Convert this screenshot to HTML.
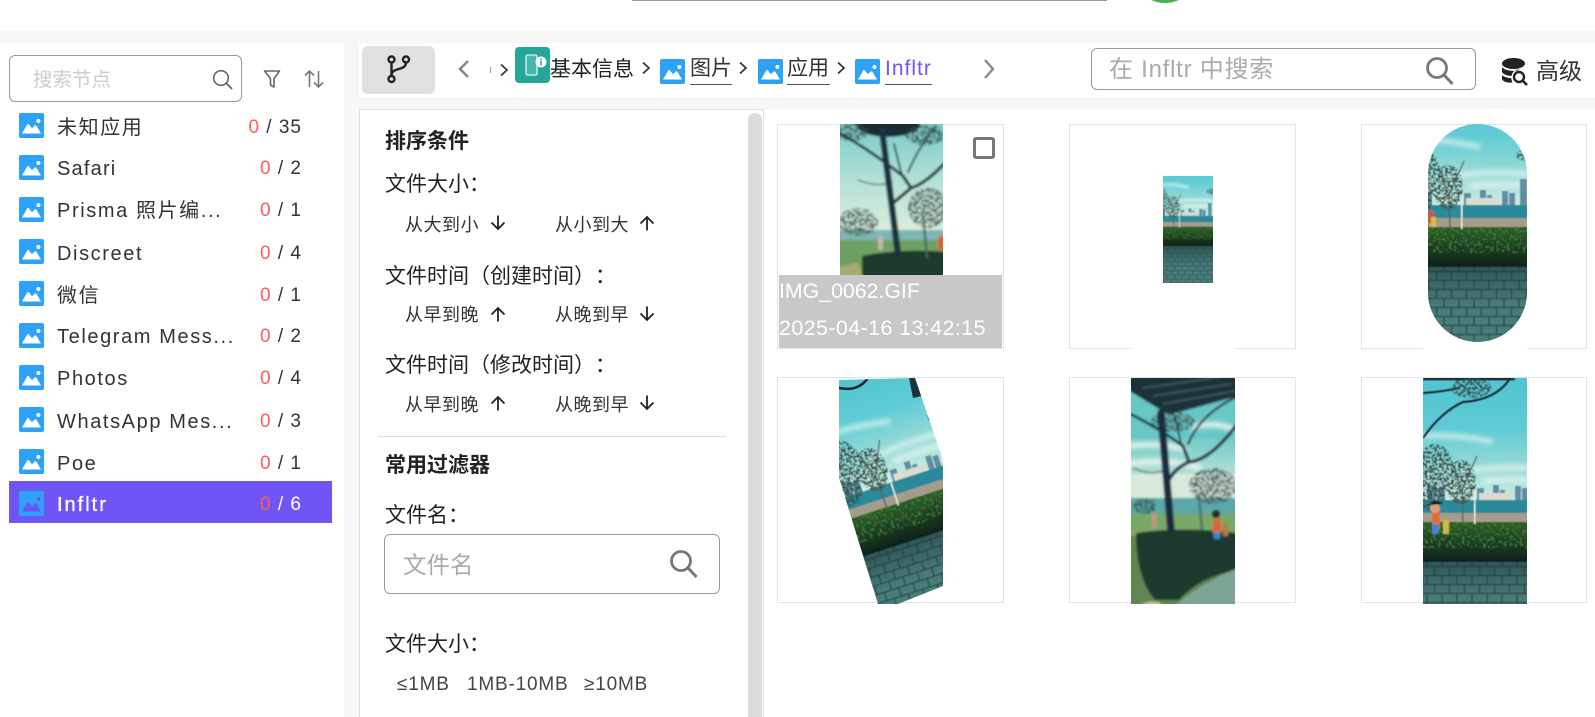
<!DOCTYPE html>
<html lang="zh"><head><meta charset="utf-8"><title>Infltr</title>
<style>
html,body{margin:0;padding:0;width:1595px;height:717px;overflow:hidden;background:#fff}
body{position:relative;font-family:"Liberation Sans","Noto Sans CJK SC",sans-serif;color:#333;text-spacing-trim:space-all}
.a{position:absolute;box-sizing:border-box}
.t{position:absolute;white-space:nowrap;line-height:30px;height:30px}
.n{font-size:20px;letter-spacing:1.6px;left:57px;color:#333}
.c{font-size:19px;letter-spacing:1px;right:1293px;color:#333;text-align:right}
.c b{font-weight:normal;color:#ff5a5f}
.l{font-size:21px;left:385px;color:#222}
.h{font-size:21px;left:385px;font-weight:bold;color:#222}
.s{font-size:18px;color:#333;letter-spacing:.5px}
.ic{position:absolute;width:25px;height:25px}
.card{position:absolute;width:227px;height:225px;border:1px solid #e3e3e3;box-sizing:border-box;background:#fff}
.u{position:absolute;height:1px;background:#555}
.sz{font-size:19px;color:#444;letter-spacing:.8px}
.bc{font-size:21px;color:#333}
</style></head><body>
<svg width="0" height="0" style="position:absolute">
<defs>
<symbol id="pic" viewBox="0 0 25 25"><rect width="25" height="25" rx="2" fill="#2ea1f8"/><path d="M3 20.5L8.3 11.4Q9 10.4 9.8 11.4L13 15.2L15.4 12.8Q16.4 11.9 17.4 12.8L22 20.5Z" fill="currentColor"/><circle cx="19.4" cy="8" r="2" fill="currentColor"/></symbol>
<symbol id="up" viewBox="0 0 16 16"><path d="M8 15.5V2M1.5 8.5L8 2L14.5 8.5" fill="none" stroke="#222" stroke-width="1.8"/></symbol>
<symbol id="dn" viewBox="0 0 16 16"><path d="M8 .5V14M1.5 7.5L8 14L14.5 7.5" fill="none" stroke="#222" stroke-width="1.8"/></symbol>
<symbol id="chev" viewBox="0 0 10 14"><path d="M2 1.5L8 7L2 12.5" fill="none" stroke="#333" stroke-width="1.7"/></symbol>
</defs></svg>

<!-- page background bands -->
<div class="a" style="left:0;top:31px;width:1595px;height:12px;background:#f7f7f7"></div>
<div class="a" style="left:344px;top:43px;width:15px;height:674px;background:#f7f7f7"></div>
<div class="a" style="left:344px;top:97px;width:1251px;height:12px;background:#f7f7f7"></div>

<!-- top remnants -->
<div class="a" style="left:632px;top:0;width:475px;height:1px;background:#999"></div>
<div class="a" style="left:1131px;top:-65px;width:68px;height:68px;border-radius:50%;background:#4caf50"></div>

<!-- sidebar -->
<div class="a" style="left:9px;top:55px;width:233px;height:47px;border:1px solid #999;border-radius:6px;background:#fff"></div>
<div class="t" style="left:33px;top:65px;font-size:19.5px;color:#c8ccd2">搜索节点</div>
<svg class="a" style="left:211px;top:68px" width="24" height="24" viewBox="0 0 24 24"><circle cx="10" cy="10" r="7.3" fill="none" stroke="#666" stroke-width="1.6"/><path d="M15.3 15.3L21 21" stroke="#666" stroke-width="1.8"/></svg>
<svg class="a" style="left:263px;top:69px" width="18" height="20" viewBox="0 0 18 20"><path d="M1.5 2H16.5L11 9.5V18L7.5 16V9.5Z" fill="none" stroke="#666" stroke-width="1.6" stroke-linejoin="round"/></svg>
<svg class="a" style="left:304px;top:69px" width="20" height="20" viewBox="0 0 20 20"><path d="M5.5 18V2M1 6.5L5.5 2L10 6.5M14.5 2V18M10 13.5L14.5 18L19 13.5" fill="none" stroke="#777" stroke-width="1.6"/></svg>

<div class="a" style="left:9px;top:481px;width:323px;height:42px;background:#6e56f5"></div>

<svg class="ic" style="left:19px;top:113px;color:#fff"><use href="#pic"/></svg>
<svg class="ic" style="left:19px;top:155px;color:#fff"><use href="#pic"/></svg>
<svg class="ic" style="left:19px;top:197px;color:#fff"><use href="#pic"/></svg>
<svg class="ic" style="left:19px;top:239px;color:#fff"><use href="#pic"/></svg>
<svg class="ic" style="left:19px;top:281px;color:#fff"><use href="#pic"/></svg>
<svg class="ic" style="left:19px;top:323px;color:#fff"><use href="#pic"/></svg>
<svg class="ic" style="left:19px;top:365px;color:#fff"><use href="#pic"/></svg>
<svg class="ic" style="left:19px;top:407px;color:#fff"><use href="#pic"/></svg>
<svg class="ic" style="left:19px;top:449px;color:#fff"><use href="#pic"/></svg>
<svg class="ic" style="left:19px;top:491px;color:#6e56f5"><use href="#pic"/></svg>

<div class="t n" style="top:113px">未知应用</div><div class="t c" style="top:113px"><b>0</b> / 35</div>
<div class="t n" style="top:154px;letter-spacing:1.2px">Safari</div><div class="t c" style="top:154px"><b>0</b> / 2</div>
<div class="t n" style="top:196px">Prisma 照片编...</div><div class="t c" style="top:196px"><b>0</b> / 1</div>
<div class="t n" style="top:239px">Discreet</div><div class="t c" style="top:239px"><b>0</b> / 4</div>
<div class="t n" style="top:281px">微信</div><div class="t c" style="top:281px"><b>0</b> / 1</div>
<div class="t n" style="top:322px">Telegram Mess...</div><div class="t c" style="top:322px"><b>0</b> / 2</div>
<div class="t n" style="top:364px">Photos</div><div class="t c" style="top:364px"><b>0</b> / 4</div>
<div class="t n" style="top:407px">WhatsApp Mes...</div><div class="t c" style="top:407px"><b>0</b> / 3</div>
<div class="t n" style="top:449px">Poe</div><div class="t c" style="top:449px"><b>0</b> / 1</div>
<div class="t n" style="top:490px;color:#fff;-webkit-text-stroke:.3px #fff;letter-spacing:2px">Infltr</div><div class="t c" style="top:490px;color:#fff"><b>0</b> / 6</div>

<!-- toolbar -->
<div class="a" style="left:362px;top:46px;width:73px;height:48px;background:#e0e0e0;border-radius:6px"></div>
<svg class="a" style="left:385px;top:53px" width="27" height="32" viewBox="0 0 27 32"><circle cx="6.5" cy="6.5" r="3" fill="none" stroke="#222" stroke-width="2.4"/><circle cx="21" cy="6.5" r="3" fill="none" stroke="#222" stroke-width="2.4"/><circle cx="6.5" cy="26" r="3" fill="none" stroke="#222" stroke-width="2.4"/><path d="M6.5 9.5V23M21 9.5C21 18 7 14 6.5 22" fill="none" stroke="#222" stroke-width="2.4"/></svg>
<svg class="a" style="left:457px;top:59px" width="14" height="20" viewBox="0 0 14 20"><path d="M11 2L3 10L11 18" fill="none" stroke="#888" stroke-width="2.6"/></svg>
<div class="a" style="left:490px;top:67px;width:1px;height:6px;background:#999"></div>
<svg class="a" style="left:499px;top:63px" width="10" height="14"><use href="#chev"/></svg>
<div class="a" style="left:515px;top:47px;width:35px;height:36px;background:#26a69a;border-radius:4px"></div>
<svg class="a" style="left:515px;top:47px" width="35" height="36" viewBox="0 0 35 36"><rect x="11" y="8" width="11" height="20" rx="1.5" fill="#4dbcb0" stroke="#fff" stroke-width="1.3" opacity=".85"/><circle cx="26" cy="15" r="5.5" fill="#fff"/><rect x="25.2" y="14" width="1.6" height="4.4" fill="#26a69a"/><rect x="25.2" y="11.6" width="1.6" height="1.6" fill="#26a69a"/></svg>
<div class="t bc" style="left:550px;top:55px;color:#222">基本信息</div>
<svg class="a" style="left:641px;top:61px" width="10" height="14"><use href="#chev"/></svg>
<svg class="ic" style="left:660px;top:59px;color:#fff"><use href="#pic"/></svg>
<div class="t bc" style="left:690px;top:54px">图片</div>
<div class="u" style="left:690px;top:84px;width:42px"></div>
<svg class="a" style="left:738px;top:61px" width="10" height="14"><use href="#chev"/></svg>
<svg class="ic" style="left:758px;top:59px;color:#fff"><use href="#pic"/></svg>
<div class="t bc" style="left:787px;top:54px">应用</div>
<div class="u" style="left:787px;top:84px;width:43px"></div>
<svg class="a" style="left:836px;top:61px" width="10" height="14"><use href="#chev"/></svg>
<svg class="ic" style="left:855px;top:59px;color:#fff"><use href="#pic"/></svg>
<div class="t" style="left:885px;top:54px;font-size:21px;letter-spacing:1px;color:#6e56f5">Infltr</div>
<div class="u" style="left:885px;top:84px;width:47px"></div>
<svg class="a" style="left:982px;top:58px" width="14" height="22" viewBox="0 0 14 22"><path d="M3 2L11 11L3 20" fill="none" stroke="#888" stroke-width="2.4"/></svg>

<div class="a" style="left:1091px;top:48px;width:385px;height:42px;border:1px solid #999;border-radius:6px"></div>
<div class="t" style="left:1109px;top:55px;font-size:24px;letter-spacing:.75px;color:#aaa">在 Infltr 中搜索</div>
<svg class="a" style="left:1424px;top:55px" width="32" height="32" viewBox="0 0 32 32"><circle cx="13" cy="13" r="9.5" fill="none" stroke="#777" stroke-width="2.8"/><path d="M20 20L28.5 29" stroke="#777" stroke-width="3"/></svg>
<svg class="a" style="left:1501px;top:57px" width="29" height="30" viewBox="0 0 29 30"><ellipse cx="12.5" cy="6.5" rx="11.5" ry="5.5" fill="#222"/><path d="M1 10C4 14 14 15 19 12.5C13 12 11 16 10.5 19C6 19 2 17 1 15ZM1 18C3 20 7 21 10 21L11.5 25.5C7 26 2 25 1 22Z" fill="#222"/><circle cx="18" cy="20" r="5" fill="none" stroke="#222" stroke-width="2.4"/><path d="M21.5 23.5L26 28" stroke="#222" stroke-width="2.6"/></svg>
<div class="t" style="left:1536px;top:56px;font-size:23px;color:#333">高级</div>

<!-- filter panel -->
<div class="a" style="left:359px;top:109px;width:405px;height:620px;border:1px solid #e0e0e0;background:#fff"></div>
<div class="a" style="left:748px;top:113px;width:14px;height:610px;background:#dcdcdc;border-radius:7px 7px 0 0"></div>

<div class="t h" style="top:127px">排序条件</div>
<div class="t l" style="top:170px">文件大小：</div>
<div class="t s" style="left:405px;top:210px">从大到小</div><svg class="a" style="left:490px;top:215px" width="16" height="16"><use href="#dn"/></svg>
<div class="t s" style="left:555px;top:210px">从小到大</div><svg class="a" style="left:639px;top:215px" width="16" height="16"><use href="#up"/></svg>
<div class="t l" style="top:262px">文件时间（创建时间）：</div>
<div class="t s" style="left:405px;top:300px">从早到晚</div><svg class="a" style="left:490px;top:306px" width="16" height="16"><use href="#up"/></svg>
<div class="t s" style="left:555px;top:300px">从晚到早</div><svg class="a" style="left:639px;top:306px" width="16" height="16"><use href="#dn"/></svg>
<div class="t l" style="top:351px">文件时间（修改时间）：</div>
<div class="t s" style="left:405px;top:390px">从早到晚</div><svg class="a" style="left:490px;top:395px" width="16" height="16"><use href="#up"/></svg>
<div class="t s" style="left:555px;top:390px">从晚到早</div><svg class="a" style="left:639px;top:395px" width="16" height="16"><use href="#dn"/></svg>
<div class="a" style="left:378px;top:436px;width:348px;height:1px;background:#e0e0e0"></div>
<div class="t h" style="top:451px">常用过滤器</div>
<div class="t l" style="top:501px">文件名：</div>
<div class="a" style="left:384px;top:534px;width:336px;height:60px;border:1px solid #999;border-radius:6px"></div>
<div class="t" style="left:403px;top:550px;font-size:23.5px;color:#aaa">文件名</div>
<svg class="a" style="left:668px;top:548px" width="32" height="32" viewBox="0 0 32 32"><circle cx="13" cy="13" r="9.5" fill="none" stroke="#777" stroke-width="2.8"/><path d="M20 20L28.5 29" stroke="#777" stroke-width="3"/></svg>
<div class="t l" style="top:630px">文件大小：</div>
<div class="t sz" style="left:397px;top:670px">≤1MB</div>
<div class="t sz" style="left:467px;top:670px">1MB-10MB</div>
<div class="t sz" style="left:584px;top:670px">≥10MB</div>

<!-- cards -->
<div class="card" style="left:777px;top:124px"></div>
<div class="card" style="left:1069px;top:124px"></div>
<div class="card" style="left:1361px;top:124px;width:226px"></div>
<div class="card" style="left:777px;top:377px;height:226px"></div>
<div class="card" style="left:1069px;top:377px;height:226px"></div>
<div class="card" style="left:1361px;top:377px;width:226px;height:226px"></div>
<div class="a" style="left:1131px;top:346px;width:104px;height:3px;background:#fff"></div>
<div class="a" style="left:1423px;top:346px;width:104px;height:3px;background:#fff"></div>

<svg class="a" style="left:0;top:0;pointer-events:none" width="1595" height="717" viewBox="0 0 1595 717">
<defs>
<linearGradient id="sky" x1="0" y1="0" x2="0" y2="1"><stop offset="0" stop-color="#45bdcd"/><stop offset=".55" stop-color="#5fcbd5"/><stop offset=".8" stop-color="#9cdcd8"/><stop offset="1" stop-color="#cfeee5"/></linearGradient>
<linearGradient id="sky2" x1="0" y1="0" x2="0" y2="1"><stop offset="0" stop-color="#74cbc9"/><stop offset=".55" stop-color="#b9e2d8"/><stop offset="1" stop-color="#e2eede"/></linearGradient>
<linearGradient id="hed" x1="0" y1="0" x2="0" y2="1"><stop offset="0" stop-color="#2f6029"/><stop offset=".45" stop-color="#1c3f25"/><stop offset="1" stop-color="#0e1e18"/></linearGradient>
<linearGradient id="pave" x1="0" y1="0" x2="0" y2="1"><stop offset="0" stop-color="#1f3d40" stop-opacity=".6"/><stop offset=".3" stop-color="#1f3d40" stop-opacity="0"/></linearGradient>
<pattern id="brick" width="15" height="18" patternUnits="userSpaceOnUse"><rect width="15" height="18" fill="#4a7c7a"/><path d="M0 8.5H15M0 17.5H15M4 0V8M11.5 9V17" stroke="#23474a" stroke-width="1.2"/></pattern>
<filter id="b1" x="-5%" y="-5%" width="110%" height="110%"><feGaussianBlur stdDeviation=".5"/></filter>
<filter id="b2" x="-5%" y="-5%" width="110%" height="110%"><feGaussianBlur stdDeviation="1"/></filter>
<filter id="b3" x="-20%" y="-50%" width="140%" height="200%"><feGaussianBlur stdDeviation="2.2"/></filter>
<filter id="leaf" x="0" y="0" width="100%" height="100%" color-interpolation-filters="sRGB"><feTurbulence type="fractalNoise" baseFrequency=".42" numOctaves="2" seed="3"/><feColorMatrix values="0 0 0 0 .2  0 0 0 0 .3  0 0 0 0 .27  0 0 0 7 -3"/><feComposite in2="SourceGraphic" operator="in"/></filter>
<filter id="hedn" x="0" y="0" width="100%" height="100%" color-interpolation-filters="sRGB"><feTurbulence type="fractalNoise" baseFrequency=".38" numOctaves="2" seed="8"/><feColorMatrix values="0 0 0 0 .27  0 0 0 0 .5  0 0 0 0 .2  0 0 0 6 -3.2"/><feComposite in2="SourceGraphic" operator="in"/></filter>
<clipPath id="c1"><rect x="840" y="124" width="103" height="152"/></clipPath>
<clipPath id="c2"><rect x="1163" y="176" width="50" height="107"/></clipPath>
<clipPath id="c3"><rect x="1428" y="124" width="99" height="218" rx="49.5"/></clipPath>
<clipPath id="c4"><polygon points="839,380 915,378 943,460 943,586 898,604 878,604 839,478"/></clipPath>
<clipPath id="c5"><rect x="1131" y="378" width="104" height="226"/></clipPath>
<clipPath id="c6"><rect x="1423" y="378" width="104" height="226"/></clipPath>
<g id="harbour">
<rect x="-120" y="-40" width="340" height="165" fill="url(#sky)"/>
<g filter="url(#b3)"><path d="M40 94Q80 86 130 92M60 103Q95 99 140 105M-40 62Q20 52 70 64" fill="none" stroke="#eef9f2" stroke-width="6" opacity=".6"/></g>
<g fill="#5f8da3"><rect x="-60" y="108" width="28" height="14"/><rect x="4" y="107" width="9" height="15"/><rect x="14" y="110" width="8" height="12"/><rect x="54" y="110" width="7" height="12"/><rect x="70" y="107" width="6" height="15"/><rect x="77" y="112" width="5" height="10"/><rect x="92" y="108" width="6" height="14"/><rect x="99" y="110" width="6" height="12"/><rect x="110" y="96" width="7" height="26"/></g>
<rect x="56" y="115" width="34" height="7" fill="#d9dccf"/>
<rect x="-120" y="122" width="340" height="14" fill="#2a8a9b"/>
<rect x="-120" y="135" width="340" height="11" fill="#a69c8c"/>
<rect x="-120" y="144" width="340" height="42" fill="url(#hed)"/>
<rect x="-120" y="144" width="340" height="26" filter="url(#hedn)"/>
<rect x="-120" y="184" width="340" height="130" fill="url(#brick)"/>
<rect x="-120" y="184" width="340" height="130" fill="url(#pave)"/>
<g filter="url(#leaf)"><ellipse cx="12" cy="90" rx="18" ry="24"/><ellipse cx="8" cy="118" rx="14" ry="14"/><ellipse cx="38" cy="104" rx="15" ry="22"/><ellipse cx="118" cy="72" rx="12" ry="6"/></g>
<path d="M40 146L39 112M39 112L28 82M39 112L54 78M38 126L20 108" stroke="#4f5f54" stroke-width="1.3" fill="none"/>
<rect x="51" y="112" width="1.5" height="34" fill="#e3eae0"/>
</g>
<g id="trees6">
<path d="M0 15Q18 14 36 10M0 60Q18 34 40 24Q72 22 86 2" fill="none" stroke="#12242f" stroke-width="2.4"/>
<path d="M0 1H92" stroke="#12242f" stroke-width="3"/>
<g filter="url(#leaf)"><ellipse cx="48" cy="10" rx="20" ry="10"/></g>
<rect x="9" y="133" width="8" height="18" fill="#dd7038"/><rect x="9" y="146" width="7" height="10" fill="#3f87c9"/><circle cx="12" cy="130" r="5" fill="#d9a27c"/><path d="M6 127Q12 119 19 126" fill="#1a1a22"/><rect x="20" y="142" width="6" height="14" fill="#cdb84a"/>
</g>
</defs>

<!-- card 1 -->
<g clip-path="url(#c1)"><g filter="url(#b2)">
<rect x="836" y="120" width="112" height="120" fill="url(#sky2)"/>
<rect x="836" y="230" width="112" height="11" fill="#7fb5b3"/>
<rect x="836" y="240" width="112" height="40" fill="#6ea063"/>
<path d="M862 256Q900 248 948 252V280H862Z" fill="#1d3a2c"/>
<path d="M838 268L858 262L864 280H838Z" fill="#a5ad70"/>
<ellipse cx="888" cy="124" rx="32" ry="13" fill="#1d2c33"/>
<g filter="url(#leaf)"><ellipse cx="928" cy="208" rx="20" ry="20"/><ellipse cx="858" cy="222" rx="20" ry="14"/><ellipse cx="852" cy="132" rx="16" ry="9"/><ellipse cx="925" cy="135" rx="20" ry="10"/></g>
<g fill="none" stroke="#1e3040" stroke-linecap="round"><path d="M882 130L898 254" stroke-width="6.5"/><path d="M838 132Q870 150 903 176" stroke-width="2.8"/><path d="M903 176L911 188Q925 184 945 163" stroke-width="3.2"/><path d="M911 188L892 204" stroke-width="3.2"/><path d="M902 176L894 144" stroke-width="1.8"/><path d="M908 172Q920 145 936 126" stroke-width="1.8"/><path d="M858 180Q878 188 892 182" stroke-width="1.2"/></g>
<path d="M923 215L927 258" stroke="#45635e" stroke-width="2.2"/>
<rect x="938" y="236" width="6" height="14" fill="#d9632f"/>
<rect x="878" y="236" width="5" height="14" fill="#c4b3a8"/>
</g></g>

<!-- card 2 -->
<g clip-path="url(#c2)"><g filter="url(#b2)" transform="translate(1154.2 156) scale(.49)"><use href="#harbour"/></g></g>

<!-- card 3 -->
<g clip-path="url(#c3)"><g filter="url(#b1)" transform="translate(1410 83)"><use href="#harbour"/><rect x="18" y="128" width="6" height="12" fill="#c9564a"/><rect x="21" y="134" width="5" height="10" fill="#d8c13f"/></g></g>

<!-- card 4 -->
<g clip-path="url(#c4)"><g filter="url(#b1)" transform="translate(893 488) rotate(-18) translate(-52 -128)"><use href="#harbour"/></g>
<path d="M839 388Q858 392 868 378" fill="none" stroke="#12242f" stroke-width="2.5"/>
<polygon points="909,378 916,378 922,396 913,398" fill="#1e333c"/></g>

<!-- card 5 -->
<g clip-path="url(#c5)"><g filter="url(#b2)" transform="translate(1131 378)">
<rect x="-3" y="-3" width="110" height="232" fill="#69c6c6"/>
<rect x="-3" y="60" width="110" height="60" fill="url(#sky2)" opacity=".85"/>
<g filter="url(#b3)"><path d="M-3 68Q30 64 55 72M60 50Q85 42 104 52M-3 86Q40 80 70 90" stroke="#eef7ef" stroke-width="5" fill="none"/></g>
<rect x="-3" y="96" width="110" height="26" fill="#d8e8da"/>
<rect x="-3" y="120" width="110" height="18" fill="#5ca8a8"/>
<rect x="-3" y="136" width="110" height="22" fill="#7aa866"/>
<path d="M-3 158H107V229H-3Z" fill="#5f8650"/>
<path d="M5 155Q50 148 107 155V192Q70 198 48 222H24Q5 200 5 155Z" fill="#1b3a2e"/>
<path d="M42 229Q70 205 107 190V229Z" fill="#7ba595"/>
<path d="M8 229Q14 222 28 224L32 229Z" fill="#c9bf95"/>
<path d="M-3 -3H107V18L38 37L-3 12Z" fill="#1f3238"/>
<path d="M12 10L90 -1M22 18L100 6M32 26L104 13" stroke="#435f63" stroke-width="1.4"/>
<g filter="url(#leaf)"><ellipse cx="42" cy="44" rx="22" ry="10"/><ellipse cx="82" cy="108" rx="24" ry="18"/><ellipse cx="14" cy="128" rx="12" ry="8"/></g>
<g fill="none" stroke="#1b2c40" stroke-linecap="round"><path d="M30 35L40 152" stroke-width="7.5"/><path d="M-3 35Q25 48 52 68" stroke-width="2.8"/><path d="M52 68L58 84Q80 82 107 45" stroke-width="3.2"/><path d="M58 84Q44 90 38 102" stroke-width="3.4"/><path d="M50 66L44 38" stroke-width="1.8"/><path d="M57 66Q70 35 107 18" stroke-width="2.2"/><path d="M2 90Q20 98 34 92" stroke-width="1.1"/></g>
<path d="M68 118L71 152" stroke="#4a6a62" stroke-width="2.2"/>
<rect x="82" y="141" width="8" height="15" fill="#e06432"/><rect x="83" y="154" width="6" height="7" fill="#3b8ccc"/><circle cx="85" cy="136" r="4.2" fill="#2a2a30"/>
<rect x="92" y="146" width="5" height="12" fill="#b8793a"/>
<rect x="21" y="135" width="4" height="15" fill="#c79086"/>
</g></g>

<!-- card 6 -->
<g clip-path="url(#c6)"><g filter="url(#b1)" transform="translate(1423 378)"><use href="#harbour"/><use href="#trees6"/></g></g>
</svg>

<!-- card 1 overlay -->
<div class="a" style="left:779px;top:275px;width:223px;height:73px;background:#c8c8c8"></div>
<div class="t" style="left:779px;top:276px;font-size:21.3px;color:#fff">IMG_0062.GIF</div>
<div class="t" style="left:779px;top:313px;font-size:21.5px;letter-spacing:.38px;color:#fff">2025-04-16 13:42:15</div>
<div class="a" style="left:973px;top:137px;width:22px;height:22px;border:3px solid #777;border-radius:3px"></div>
</body></html>
